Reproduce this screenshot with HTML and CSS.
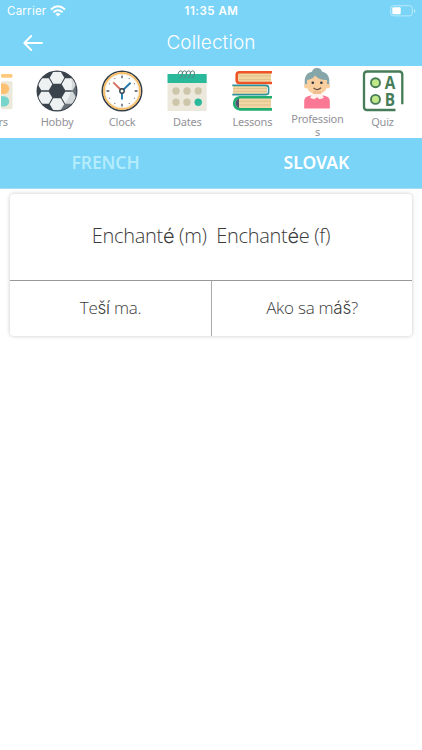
FILE: index.html
```html
<!DOCTYPE html>
<html lang="en">
<head>
<meta charset="utf-8">
<meta name="viewport" content="width=device-width">
<title>Collection</title>
<link rel="stylesheet" href="styles.css">
</head>
<body>
<header class="header">
  <div class="status">
    <div class="carrier"><span class="carrier-name">Carrier</span>
      <svg class="wifi" viewBox="0 0 16 12" fill="none" stroke="#fff" stroke-width="2"><path d="M1 4.4Q8-1.8 15 4.4M3.4 7.2Q8 3.2 12.6 7.2"/><path d="M5.4 8.9Q8 6.9 10.6 8.9L8 11.5Z" fill="#fff" stroke="none"/></svg>
    </div>
    <time class="time">11:35 AM</time>
    <svg class="battery" viewBox="0 0 26 12"><rect x=".7" y=".7" width="21.6" height="10.2" rx="2.8" fill="none" stroke="#b9ebfb"/><rect x="2.3" y="2.3" width="8.4" height="7" rx="1" fill="#fff"/><path d="M24 4v4q1.4-.6 1.4-2T24 4" fill="#b9ebfb"/></svg>
  </div>
  <div class="navbar">
    <svg class="back" viewBox="0 0 20 16" fill="none" stroke="#fff" stroke-width="1.9" stroke-linecap="round" stroke-linejoin="round"><path d="M19 8H1.3M8.2 1L1.3 8l6.9 7"/></svg>
    <h1 class="title">Collection</h1>
  </div>
</header>
<nav class="categories">
  <div class="category">
    <svg class="icon" viewBox="0 0 42 42"><rect x="30" y="4" width="11.5" height="3.7" rx="1.4" fill="#fdc97b"/><rect x="30" y="11.3" width="11.5" height="28" rx="1.5" fill="#ece9da"/><path d="M30 13.5h3a5.2 5.2 0 0 1 0 10.4h-3z" fill="#fdc174"/><path d="M30 26.2h3a5.2 5.2 0 0 1 0 10.4h-3z" fill="#78d5ce"/></svg>
    <span class="label">Colors</span>
  </div>
  <div class="category">
    <svg class="icon" viewBox="0 0 42 42">
      <defs><clipPath id="ball"><circle cx="21" cy="21" r="19.5"/></clipPath><path id="panel" d="M-7.3 0L-3.8-6H3.8L7.3 0 3.8 6H-3.8z"/></defs>
      <circle cx="21" cy="21" r="20.5" fill="#3a434c"/>
      <g clip-path="url(#ball)" fill="#eef1f1"><use href="#panel" x="21" y="7.7"/><use href="#panel" x="9" y="14.3"/><use href="#panel" x="33" y="14.3"/><use href="#panel" x="9" y="27.7"/><use href="#panel" x="33" y="27.7"/><use href="#panel" x="21" y="34.3"/><path d="M35 8Q40 24 22 41Q31 41 37 34Q45 20 35 8" fill="#abb3b7" opacity=".4"/></g>
    </svg>
    <span class="label">Hobby</span>
  </div>
  <div class="category">
    <svg class="icon" viewBox="0 0 42 42"><circle cx="21" cy="21" r="19.7" fill="#fff" stroke="#36404a" stroke-width="1.6"/><circle cx="21" cy="21" r="18" fill="none" stroke="#f7bc63" stroke-width="1.8"/><circle cx="21" cy="21" r="16.7" fill="none" stroke="#f6ead2"/><path stroke="#454c60" stroke-width="1.3" d="M21 5.5v2.8M21 33.7v2.8M5.5 21h2.8M33.7 21h2.8"/><path stroke="#777c89" stroke-width="1.1" d="M13.5 8l.6 1M28.5 8l-.6 1M8 13.5l1 .6M34 13.5l-1 .6M8 28.5l1-.6M34 28.5l-1-.6M13.5 34l.6-1M28.5 34l-.6-1"/><path d="M12.3 12.3L21 21" stroke="#d8675c" stroke-width="1.8"/><path d="M21 21l8.6-8.3M21 21v8.5" stroke="#237aac" stroke-width="1.9"/><circle cx="21" cy="21" r="2.2" fill="#fff" stroke="#33404b" stroke-width="1.4"/></svg>
    <span class="label">Clock</span>
  </div>
  <div class="category">
    <svg class="icon" viewBox="0 0 42 42"><path d="M1.5 4h39.2v9H1.5z" fill="#2bb99c"/><path d="M1.5 13h39.2v28H1.5z" fill="#ece9dc"/><g fill="#cec6aa"><circle cx="10" cy="21" r="3.7"/><circle cx="21" cy="21" r="3.7"/><circle cx="32.2" cy="21" r="3.7"/><circle cx="10" cy="32.3" r="3.7"/><circle cx="21" cy="32.3" r="3.7"/></g><circle cx="32.2" cy="32.3" r="3.7" fill="#2bb99c"/><g fill="none" stroke="#5b7f7d" stroke-width="1"><path d="M12.1 4Q12.6.8 14.8.8t1.6 3.5-3 3.7M16.1 4Q16.6.8 18.8.8t1.6 3.5-3 3.7M20.1 4Q20.6.8 22.8.8t1.6 3.5-3 3.7M24.1 4Q24.6.8 26.8.8t1.6 3.5-3 3.7"/></g></svg>
    <span class="label">Dates</span>
  </div>
  <div class="category">
    <svg class="icon" viewBox="0 0 42 42"><path d="M7 3h33v10H7z" fill="#f1d5a1"/><path d="M8 6h32M8 9.5h32" stroke="#d8b985" stroke-width=".7"/><path d="M41 2.3H8.5Q5.7 2.3 5.7 5v5.3Q5.7 13 8.5 13H41" fill="none" stroke="#ee5426" stroke-width="2.6"/><path d="M2 16h34v8H2z" fill="#f2d6a4"/><path d="M2 18.5h34M2 21.4h34" stroke="#d8b985" stroke-width=".7"/><path d="M1.3 15.4H34.5Q37.6 15.4 37.6 18v4.4q0 2.2-3.1 2.2H1.3" fill="none" stroke="#2c939b" stroke-width="1.6"/><path d="M7 28h33v10H7z" fill="#f2d6a4"/><path d="M8 31.3h32M8 35h32" stroke="#d8b985" stroke-width=".7"/><path d="M41 27.2H9Q3.2 28 3.2 33.2T9 39.4H41" fill="none" stroke="#20ad72" stroke-width="2.6"/><path d="M8 28.5Q4.5 30 4.5 33.3T8 38z" fill="#4e526d"/></svg>
    <span class="label">Lessons</span>
  </div>
  <div class="category category-long">
    <svg class="icon" viewBox="0 0 42 42"><circle cx="21" cy="6" r="5.2" fill="#87a6aa"/><path d="M8.7 20V14Q8.7 4 21 4t12.3 10v6z" fill="#87a6aa"/><path d="M11 13Q17 12 19 8.4 24 13.5 31 13v6Q30 27 21 27T11 19z" fill="#f9cfa0"/><circle cx="10.2" cy="19.3" r="2.2" fill="#f9cfa0"/><circle cx="31.8" cy="19.3" r="2.2" fill="#f9cfa0"/><path d="M17 24h8v7h-8z" fill="#f1bd8f"/><circle cx="16.8" cy="15.8" r="1.3" fill="#30343a"/><circle cx="25.4" cy="15.8" r="1.3" fill="#30343a"/><path d="M17.6 20.8Q21 24.3 25 20.8" fill="none" stroke="#624d42" stroke-width="1.2"/><path d="M8.2 41.5V34q0-4 4.5-5l4-1h8.6l4 1q4.5 1 4.5 5v7.5z" fill="#fa7893"/><path d="M16 27h10l1.8 4-4.2 1.3-2.6-2-2.7 2-4.2-1.3z" fill="#fff1ec"/></svg>
    <span class="label">Profession<br>s</span>
  </div>
  <div class="category">
    <svg class="icon" viewBox="0 0 42 42"><path d="M40.3 34.3V4.5Q40.3 1.5 37.3 1.5H5Q2 1.5 2 4.5V37q0 3 3 3H33.5" fill="none" stroke="#467c57" stroke-width="2.3"/><circle cx="13.5" cy="12.7" r="4.5" fill="#c0e889" stroke="#467c57" stroke-width="1.9"/><circle cx="13.5" cy="29.4" r="4.5" fill="#c0e889" stroke="#467c57" stroke-width="1.9"/><text class="quiz-letter" transform="translate(28 19.2) scale(.85 1)">A</text><text class="quiz-letter" transform="translate(28 36) scale(.85 1)">B</text></svg>
    <span class="label">Quiz</span>
  </div>
</nav>
<div class="tabs"><div class="tab tab-muted">FRENCH</div><div class="tab">SLOVAK</div></div>
<main class="card">
  <div class="question"><span class="question-text">Enchant<span class="accent">é</span> (m)&nbsp; Enchant<span class="accent">é</span>e (f)</span></div>
  <div class="answers">
    <div class="answer"><span>Te<span class="accent">ší</span> ma.</span></div>
    <div class="answer"><span>Ako sa m<span class="accent">áš</span>?</span></div>
  </div>
</main>
</body>
</html>
```
FILE: styles.css
```css
* { box-sizing: border-box; }
body {
  margin: 0;
  height: 750px;
  overflow: hidden;
  background: #fff;
  font-family: "Noto Sans", "Open Sans", sans-serif;
}
svg { display: block; flex: none; }

.header {
  height: 66px;
  background: #79d4f7;
  color: #fff;
  font-family: Inter, "Liberation Sans", sans-serif;
}
.status {
  display: grid;
  grid-template-columns: 1fr auto 1fr;
  align-items: center;
  height: 22px;
  padding: 0 6px 0 7px;
}
.carrier { display: flex; align-items: center; gap: 4px; }
.carrier-name { font-size: 11.5px; letter-spacing: .25px; }
.wifi { width: 16px; height: 12px; }
.time { font-size: 11.5px; font-weight: 600; letter-spacing: .5px; }
.battery { width: 26px; height: 12px; justify-self: end; }
.navbar {
  display: grid;
  grid-template-columns: 20px 1fr 20px;
  align-items: center;
  height: 42px;
  padding: 0 23px;
}
.back { width: 20px; height: 16px; }
.title {
  margin: 0;
  font-size: 19px;
  line-height: 24px;
  font-weight: 300;
  letter-spacing: .1px;
  text-align: center;
}

.categories {
  display: flex;
  height: 72px;
  padding-top: 4px;
  margin-left: -40.6px;
}
.category {
  display: flex;
  flex: 0 0 65.1px;
  flex-direction: column;
  align-items: center;
  gap: 3px;
}
.icon { width: 42px; height: 42px; }
.label {
  color: #929297;
  font-size: 11px;
  line-height: 13px;
  letter-spacing: -.2px;
  text-align: center;
}
.category-long { margin-top: -3px; }
.quiz-letter {
  fill: #467c57;
  font: 700 18px "Open Sans", sans-serif;
  text-anchor: middle;
}

.tabs {
  display: grid;
  grid-template-columns: 1fr 1fr;
  align-items: center;
  height: 51px;
  padding-bottom: 3px;
  background: #79d4f7;
  border-bottom: 1px solid #a5dcf2;
}
.tab {
  color: #fff;
  font-size: 17.5px;
  font-weight: 600;
  text-align: center;
}
.tab-muted { color: #b3ecfc; letter-spacing: -.1px; }

.card {
  margin: 5px 10px 0;
  height: 142px;
  border-radius: 4px;
  box-shadow: 0 0 4px rgba(0, 0, 0, .22);
  color: #3c3c3c;
  font-family: "Open Sans", sans-serif;
  font-weight: 300;
}
.question {
  display: flex;
  align-items: center;
  justify-content: center;
  height: 87px;
  padding-bottom: 3px;
  border-bottom: 1px solid #999;
  font-size: 20px;
  letter-spacing: -.32px;
}
.answers { display: grid; grid-template-columns: 1fr 1fr; height: 55px; }
.answer {
  display: flex;
  align-items: center;
  justify-content: center;
  padding-bottom: 2px;
  font-size: 17px;
  letter-spacing: -.25px;
}
.answer + .answer { border-left: 1px solid #aaa; }
.accent { font-family: Inter, sans-serif; }
```
